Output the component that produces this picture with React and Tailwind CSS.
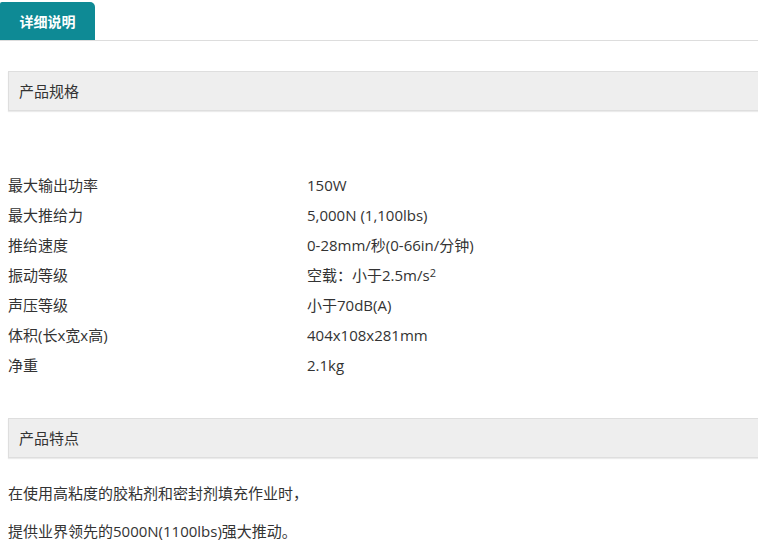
import React from 'react';

const SPECS = [
  ['最大输出功率', '150W'],
  ['最大推给力', '5,000N (1,100lbs)'],
  ['推给速度', '0-28mm/秒(0-66in/分钟)'],
  ['振动等级', <>空载：小于2.5m/s<sup className="text-[11px] relative -top-[4px]">2</sup></>],
  ['声压等级', '小于70dB(A)'],
  ['体积(长x宽x高)', '404x108x281mm'],
  ['净重', '2.1kg'],
];

function SectionTitle({ children }) {
  return (
    <div className="ml-2 h-10 flex items-center pl-[10px] bg-[#eeeeee] border border-r-0 border-[#dedede] shadow-[0_1px_1px_rgba(0,0,0,0.08)] text-[15px] text-[#333]">
      {children}
    </div>
  );
}

export default function App() {
  return (
    <div
      className="w-[758px] h-[544px] overflow-hidden bg-white text-[#333]"
      style={{ fontFamily: '"Open Sans", "Noto Sans CJK SC", sans-serif' }}
    >
      {/* Tabs */}
      <div className="h-[41px] border-b border-[#dddddd] flex items-end">
        <div className="h-[38px] w-[95px] bg-[#0e8a95] rounded-tr-[5px] rounded-tl-[2px] flex items-center justify-center text-white font-bold text-[14px]">
          详细说明
        </div>
      </div>

      <div className="mt-[30px]">
        <SectionTitle>产品规格</SectionTitle>
      </div>

      {/* Specs */}
      <div className="mt-[59px] pl-2 text-[15px]">
        {SPECS.map(([k, v]) => (
          <div key={k} className="h-[30px] flex items-center">
            <div className="w-[299px]">{k}</div>
            <div>{v}</div>
          </div>
        ))}
      </div>

      <div className="mt-[38px]">
        <SectionTitle>产品特点</SectionTitle>
      </div>

      <div className="mt-4 pl-2 text-[15px]">
        <p className="h-[38px] flex items-center">在使用高粘度的胶粘剂和密封剂填充作业时，</p>
        <p className="h-[38px] flex items-center">提供业界领先的5000N(1100lbs)强大推动。</p>
      </div>
    </div>
  );
}
